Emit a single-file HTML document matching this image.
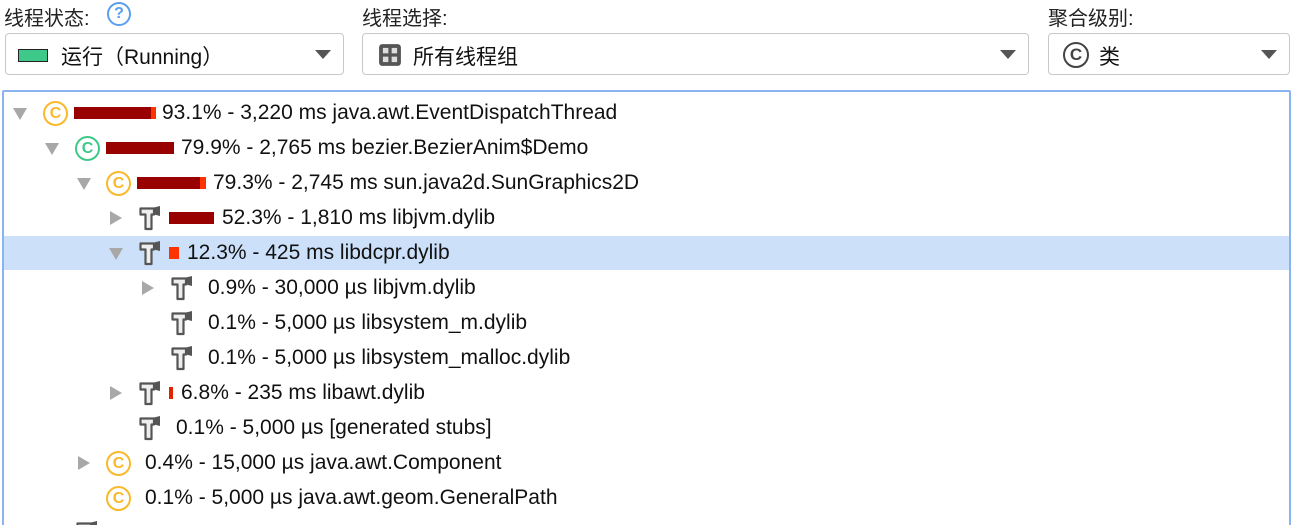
<!DOCTYPE html>
<html><head><meta charset="utf-8"><style>
html,body{margin:0;width:1293px;height:525px;overflow:hidden}
body{background:#fff;font-family:"Liberation Sans","Noto Sans CJK SC",sans-serif;color:#111;position:relative}
.a{position:absolute}
.lbl{font-size:20px;top:2px;color:#222}
.dd{position:absolute;top:33px;height:42px;border:1px solid #c8c8c8;border-radius:4px;background:#fff;box-sizing:border-box}
.tri{position:absolute;right:12px;top:16px;width:0;height:0;border-left:8px solid transparent;border-right:8px solid transparent;border-top:9px solid #555}
.ddt{position:absolute;top:7px;font-size:21px}
.row{position:absolute;left:0;width:1293px;height:35px}
.row .t{position:absolute;top:5px;font-size:21px;white-space:nowrap}
.ad{position:absolute;top:12px;width:0;height:0;border-left:7px solid transparent;border-right:7px solid transparent;border-top:12px solid #a8a8a8}
.ar{position:absolute;top:10px;width:0;height:0;border-top:7px solid transparent;border-bottom:7px solid transparent;border-left:12px solid #a8a8a8}
.c{position:absolute;top:5px;width:25px;height:25px;border:2.5px solid #f8b92a;border-radius:50%;box-sizing:border-box;color:#f8b92a;font-size:16px;display:flex;align-items:center;justify-content:center;font-weight:bold}
.bar{position:absolute;top:11px;height:12px;background:#990000}
.bar i{position:absolute;right:0;top:0;height:12px;background:#ff3300}
.h{position:absolute;top:5px}
</style></head><body>
<div class="a lbl" style="left:4px">线程状态:</div>
<div class="a" style="left:107px;top:2px;width:24px;height:24px;border:2px solid #5a9ff0;border-radius:50%;box-sizing:border-box;color:#5a9ff0;font-size:16px;display:flex;align-items:center;justify-content:center;font-weight:bold">?</div>
<div class="a lbl" style="left:362px">线程选择:</div>
<div class="a lbl" style="left:1048px">聚合级别:</div>
<div class="dd" style="left:5px;width:339px"><div class="a" style="left:12px;top:15px;width:28px;height:11px;background:#3ec98a;border:1px solid #222"></div><div class="ddt" style="left:55px">运行（Running）</div><div class="tri"></div></div>
<div class="dd" style="left:362px;width:667px"><svg class="a" style="left:15px;top:9px" width="24" height="24" viewBox="0 0 22 22"><rect x="1" y="1" width="20" height="20" rx="3" fill="#555"/><rect x="4.5" y="4.5" width="5" height="5" fill="#ddd"/><rect x="12.5" y="4.5" width="5" height="5" fill="#ddd"/><rect x="4.5" y="12.5" width="5" height="5" fill="#ddd"/><rect x="12.5" y="12.5" width="5" height="5" fill="#ddd"/></svg><div class="ddt" style="left:50px">所有线程组</div><div class="tri"></div></div>
<div class="dd" style="left:1048px;width:242px"><div class="a" style="left:14px;top:8px;width:26px;height:26px;border:2.5px solid #444;border-radius:50%;box-sizing:border-box;font-size:17px;display:flex;align-items:center;justify-content:center;font-weight:bold;color:#444">C</div><div class="ddt" style="left:50px">类</div><div class="tri"></div></div>
<div class="a" style="left:2px;top:90px;width:1289px;height:460px;border:2px solid #8ab4f0;border-radius:2px;box-sizing:border-box"></div>
<div class="a" style="left:4px;top:236px;width:1285px;height:34px;background:#cce0fa"></div>

<svg width="0" height="0" style="position:absolute"><defs><g id="hm"><path d="M1.5 2.5 H15 V8.5 H12.5 V23 H6.5 V8.5 H1.5 Z" fill="#eee" stroke="#555" stroke-width="2.2" stroke-linejoin="round"/><path d="M15 1.5 L21 0 V10 L15 8.5Z" fill="#555"/></g></defs></svg>

<div class="row" style="top:96px"><div class="ad" style="left:13px"></div><div class="c" style="left:43px">C</div><div class="bar" style="left:74px;width:82px"><i style="width:5px"></i></div><div class="t" style="left:162px">93.1% - 3,220 ms java.awt.EventDispatchThread</div></div>
<div class="row" style="top:131px"><div class="ad" style="left:45px"></div><div class="c" style="left:75px;border-color:#3ec98a;color:#3ec98a">C</div><div class="bar" style="left:106px;width:68px"></div><div class="t" style="left:181px">79.9% - 2,765 ms bezier.BezierAnim$Demo</div></div>
<div class="row" style="top:166px"><div class="ad" style="left:77px"></div><div class="c" style="left:106px">C</div><div class="bar" style="left:137px;width:69px"><i style="width:6px"></i></div><div class="t" style="left:213px">79.3% - 2,745 ms sun.java2d.SunGraphics2D</div></div>
<div class="row" style="top:201px"><div class="ar" style="left:110px"></div><svg class="h" style="left:139px" width="22" height="25"><use href="#hm"/></svg><div class="bar" style="left:169px;width:45px"></div><div class="t" style="left:222px">52.3% - 1,810 ms libjvm.dylib</div></div>
<div class="row" style="top:236px"><div class="ad" style="left:109px"></div><svg class="h" style="left:139px" width="22" height="25"><use href="#hm"/></svg><div class="bar" style="left:169px;width:10px;background:#ff3300"></div><div class="t" style="left:187px">12.3% - 425 ms libdcpr.dylib</div></div>
<div class="row" style="top:271px"><div class="ar" style="left:142px"></div><svg class="h" style="left:171px" width="22" height="25"><use href="#hm"/></svg><div class="t" style="left:208px">0.9% - 30,000 µs libjvm.dylib</div></div>
<div class="row" style="top:306px"><svg class="h" style="left:171px" width="22" height="25"><use href="#hm"/></svg><div class="t" style="left:208px">0.1% - 5,000 µs libsystem_m.dylib</div></div>
<div class="row" style="top:341px"><svg class="h" style="left:171px" width="22" height="25"><use href="#hm"/></svg><div class="t" style="left:208px">0.1% - 5,000 µs libsystem_malloc.dylib</div></div>
<div class="row" style="top:376px"><div class="ar" style="left:110px"></div><svg class="h" style="left:139px" width="22" height="25"><use href="#hm"/></svg><div class="bar" style="left:169px;width:4px;background:#e52200"></div><div class="t" style="left:181px">6.8% - 235 ms libawt.dylib</div></div>
<div class="row" style="top:411px"><svg class="h" style="left:139px" width="22" height="25"><use href="#hm"/></svg><div class="t" style="left:176px">0.1% - 5,000 µs [generated stubs]</div></div>
<div class="row" style="top:446px"><div class="ar" style="left:78px"></div><div class="c" style="left:106px">C</div><div class="t" style="left:145px">0.4% - 15,000 µs java.awt.Component</div></div>
<div class="row" style="top:481px"><div class="c" style="left:106px">C</div><div class="t" style="left:145px">0.1% - 5,000 µs java.awt.geom.GeneralPath</div></div>
<div class="row" style="top:516px"><svg class="h" style="left:76px" width="22" height="25"><use href="#hm"/></svg></div>
</body></html>
